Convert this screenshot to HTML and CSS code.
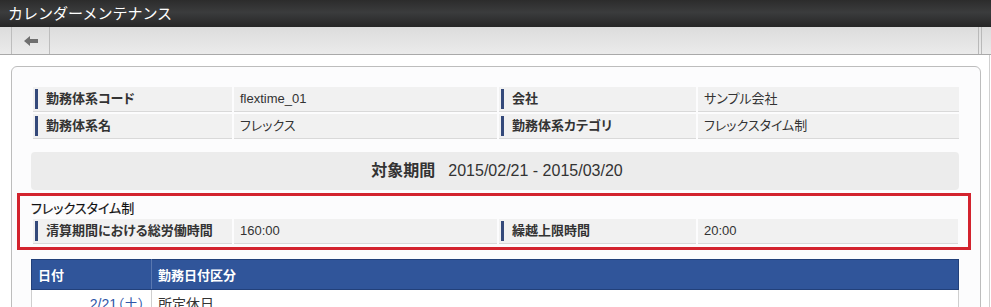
FILE: index.html
```html
<!DOCTYPE html>
<html lang="ja">
<head>
    <meta charset="UTF-8">
    <title>カレンダーメンテナンス</title>
    <link rel="stylesheet" href="styles.css">
</head>
<body>
    <div class="title-bar">カレンダーメンテナンス</div>
    <div class="toolbar">
        <button class="tool-btn" title="戻る">
            <svg width="14" height="10" viewBox="0 0 14 10"><path d="M0 5 L6 0 L6 3 L14 3 L14 7 L6 7 L6 10 Z" fill="#6f6f6f"/></svg>
        </button>
        <span class="tool-end"></span>
    </div>
    <div class="content">
        <div class="panel">
            <div class="info-grid">
                <div class="info-label"><span>勤務体系コード</span></div>
                <div class="info-value">flextime_01</div>
                <div class="info-label"><span>会社</span></div>
                <div class="info-value">サンプル会社</div>
                <div class="info-label"><span>勤務体系名</span></div>
                <div class="info-value">フレックス</div>
                <div class="info-label"><span>勤務体系カテゴリ</span></div>
                <div class="info-value">フレックスタイム制</div>
            </div>

            <div class="period">
                <span class="period-label">対象期間</span>
                <span>2015/02/21 - 2015/03/20</span>
            </div>

            <section class="flex-section">
                <h2>フレックスタイム制</h2>
                <div class="info-grid">
                    <div class="info-label"><span>清算期間における総労働時間</span></div>
                    <div class="info-value">160:00</div>
                    <div class="info-label"><span>繰越上限時間</span></div>
                    <div class="info-value">20:00</div>
                </div>
            </section>

            <table class="calendar">
                <thead>
                    <tr>
                        <th class="col-date">日付</th>
                        <th>勤務日付区分</th>
                    </tr>
                </thead>
                <tbody>
                    <tr>
                        <td class="col-date date-link">2/21（土）</td>
                        <td>所定休日</td>
                    </tr>
                </tbody>
            </table>
        </div>
    </div>
</body>
</html>
```

FILE: styles.css
```css
* { margin: 0; padding: 0; box-sizing: border-box; }
body {
    font-family: "Liberation Sans", "Noto Sans CJK JP", sans-serif;
    font-size: 13px;
    color: #333;
    background: #fff;
    font-feature-settings: "palt";
    overflow: hidden;
}
.title-bar {
    height: 27px;
    line-height: 27px;
    padding-left: 8px;
    color: #fff;
    font-size: 15px;
    font-feature-settings: normal;
    background: linear-gradient(#2c2c2c, #3b3c3d 45%, #262626);
}
.toolbar {
    display: flex;
    height: 28px;
    padding-right: 9px;
    background: linear-gradient(#dcdcdc, #ebebeb);
    border-bottom: 1px solid #a9a9a9;
}
.tool-btn {
    display: flex;
    align-items: center;
    justify-content: center;
    width: 39px;
    margin-left: 11px;
    background: transparent;
    border: none;
    border-left: 1px solid #bdbdbd;
    border-right: 1px solid #bdbdbd;
    cursor: pointer;
}
.tool-end {
    margin-left: auto;
    width: 4px;
    border-left: 1px solid #b9b9b9;
    border-right: 1px solid #b9b9b9;
}
.content {
    width: 990px;
    height: 260px;
    padding: 11px 8px 0 11px;
    border-right: 1px solid #d0d0d0;
}
.panel {
    height: 300px;
    padding: 20px 21px 0 19px;
    background: #fcfcfd;
    border: 1px solid #bdbdbd;
    border-radius: 6px 6px 0 0;
}
.info-grid {
    display: grid;
    grid-template-columns: 199px 263px 197px 1fr;
    column-gap: 2px;
    row-gap: 2px;
    margin-left: 2px;
}
.info-label, .info-value {
    height: 25px;
    background: #f1f1f1;
    border-bottom: 1px solid #d9d9d9;
}
.info-label {
    padding: 2px 0 2px 2px;
    font-weight: bold;
}
.info-label span {
    display: block;
    height: 20px;
    line-height: 20px;
    padding-left: 8px;
    border-left: 3px solid #34497a;
}
.info-value {
    padding-left: 6px;
    line-height: 24px;
}
.period {
    display: flex;
    justify-content: center;
    gap: 13px;
    margin-top: 13px;
    height: 38px;
    line-height: 38px;
    padding-left: 4px;
    font-size: 16px;
    background: #ececec;
    border-radius: 4px;
}
.period-label {
    font-weight: bold;
}
.flex-section {
    margin: 3px -12px 0 -14px;
    padding: 5px 9px 3px 11px;
    border: 3px solid #d3232e;
}
.flex-section h2 {
    font-size: 13px;
    font-weight: normal;
    color: #111;
    line-height: 16px;
    margin-bottom: 2px;
    -webkit-text-stroke: 0.2px #111;
}
.flex-section .info-grid {
    grid-template-columns: 199px 263px 197px 260px;
}
.calendar {
    width: 100%;
    margin-top: 9px;
    border-collapse: collapse;
}
.calendar th {
    height: 30px;
    padding-left: 6px;
    text-align: left;
    color: #fff;
    background: #30559a;
    border: 1px solid #22407a;
    border-right-color: #5a78b0;
}
.calendar th:last-child {
    border-right-color: #22407a;
}
.calendar td {
    height: 26px;
    padding: 0 6px;
    background: #fff;
    border: 1px solid #cfcfcf;
    vertical-align: top;
    padding-top: 3px;
    font-size: 14px;
}
.calendar .col-date {
    width: 120px;
}
.calendar td.col-date {
    text-align: right;
}
.date-link {
    color: #2f56a8;
}
```
